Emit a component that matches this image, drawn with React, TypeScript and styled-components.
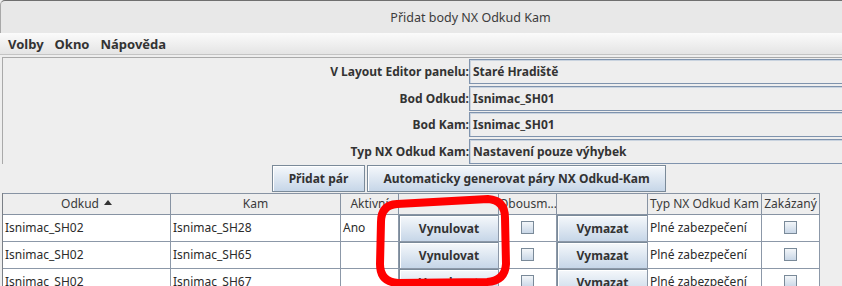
import React from 'react';
import styled, { createGlobalStyle } from 'styled-components';

const GlobalStyle = createGlobalStyle`
  html, body {
    margin: 0;
    padding: 0;
    background: #eeeeee;
  }
  body {
    font-family: 'Noto Sans', 'DejaVu Sans', sans-serif;
    color: #2b2b2b;
  }
`;

const Window = styled.div`
  position: relative;
  width: 842px;
  height: 286px;
  overflow: hidden;
  display: flex;
  flex-direction: column;
  background: #eeeeee;
`;

const TitleBar = styled.div`
  height: 32px;
  flex: none;
  border-top: 1px solid #6f6f6f;
  border-top-left-radius: 5px;
  border-left: 1px solid #a8a8a8;
  background: #e8e8e8;
  display: flex;
  align-items: center;
  justify-content: center;
  padding-left: 98px;
  font-size: 12.5px;
  color: #3c3c3c;
`;

const MenuBar = styled.div`
  height: 21px;
  flex: none;
  display: flex;
  align-items: center;
  gap: 11px;
  padding-left: 8px;
  background: linear-gradient(#fbfbfb, #e4e4e4);
  border-bottom: 1px solid #c4c4c4;
`;

const MenuItem = styled.span`
  font-size: 13px;
  font-weight: 700;
  color: #333;
`;

const FormPanel = styled.div`
  margin: 2px 0 0 2px;
  border-top: 1px solid #a9a9a9;
  border-left: 1px solid #a9a9a9;
  padding-top: 1px;
  display: grid;
  grid-template-columns: 466px 1fr;
  grid-auto-rows: 25px;
  row-gap: 1.5px;
`;

const FieldLabel = styled.div`
  display: flex;
  align-items: center;
  justify-content: flex-end;
  font-size: 12px;
  font-weight: 700;
  color: #333;
`;

const FieldValue = styled.div`
  display: flex;
  align-items: center;
  padding-left: 3px;
  border: 1px solid #7f93ad;
  border-right: none;
  box-shadow: inset 1px 1px 0 #c9d3df;
  font-size: 12px;
  font-weight: 700;
  color: #333;
`;

const ButtonRow = styled.div`
  display: flex;
  justify-content: center;
  gap: 2px;
  padding: 1.5px 0 0 96px;
  height: 27px;
  flex: none;
`;

const ActionButton = styled.button<{ $width: number }>`
  width: ${(p) => p.$width}px;
  height: 27px;
  font-family: 'Noto Sans', sans-serif;
  font-size: 12px;
  font-weight: 700;
  color: #333;
  border: 1px solid #7a8a99;
  box-shadow: inset 1px 1px 0 #ffffff;
  background: linear-gradient(#f5f8fb, #c6d6e8);
  padding: 0;
`;

const Table = styled.div`
  margin-left: 2px;
  margin-top: 0.5px;
  display: grid;
  grid-template-columns: 168px 170px 58px 100px 58px 91px 114px 58px;
  border-left: 1px solid #7a7f86;
  width: max-content;
`;

const HeaderCell = styled.div<{ $align?: string }>`
  height: 20px;
  border-top: 1px solid #8793a3;
  border-right: 1px solid #8793a3;
  border-bottom: 1px solid #8793a3;
  background: #eeeeee;
  display: flex;
  align-items: center;
  justify-content: ${(p) => p.$align || 'center'};
  gap: 5px;
  font-size: 12px;
  color: #3a3a3a;
  white-space: nowrap;
  overflow: hidden;
`;

const SortArrow = styled.span`
  width: 0;
  height: 0;
  border-left: 4px solid transparent;
  border-right: 4px solid transparent;
  border-bottom: 5px solid #333;
  margin-top: -2px;
`;

const Cell = styled.div<{ $center?: boolean }>`
  height: 26px;
  border-right: 1px solid #8c98a8;
  border-bottom: 1px solid #8c98a8;
  background: #ffffff;
  display: flex;
  align-items: center;
  justify-content: ${(p) => (p.$center ? 'center' : 'flex-start')};
  padding-left: ${(p) => (p.$center ? 0 : 2)}px;
  font-size: 12px;
  color: #2b2b2b;
  white-space: nowrap;
  overflow: hidden;
`;

const CellButton = styled.button`
  width: 100%;
  height: 100%;
  margin: 0;
  padding: 0;
  font-family: 'Noto Sans', sans-serif;
  font-size: 12px;
  font-weight: 700;
  color: #333;
  border: 1px solid #7a8a99;
  border-width: 1px 0 0 1px;
  box-shadow: inset 1px 1px 0 #ffffff;
  background: linear-gradient(#f5f8fb, #c6d6e8);
`;

const CheckBox = styled.span`
  width: 13px;
  height: 13px;
  box-sizing: border-box;
  border: 1px solid #7a8a99;
  background: linear-gradient(#f3f6f9, #c9d7e7);
`;

const Annotation = styled.svg`
  position: absolute;
  left: 0;
  top: 0;
  pointer-events: none;
`;

const fields = [
  ['V Layout Editor panelu:', 'Staré Hradiště'],
  ['Bod Odkud:', 'Isnimac_SH01'],
  ['Bod Kam:', 'Isnimac_SH01'],
  ['Typ NX Odkud Kam:', 'Nastavení pouze výhybek'],
];

const rows = [
  { from: 'Isnimac_SH02', to: 'Isnimac_SH28', active: 'Ano' },
  { from: 'Isnimac_SH02', to: 'Isnimac_SH65', active: '' },
  { from: 'Isnimac_SH02', to: 'Isnimac_SH67', active: '' },
];

export default function App() {
  return (
    <>
      <GlobalStyle />
      <Window>
        <TitleBar>Přidat body NX Odkud Kam</TitleBar>
        <MenuBar>
          <MenuItem>Volby</MenuItem>
          <MenuItem>Okno</MenuItem>
          <MenuItem>Nápověda</MenuItem>
        </MenuBar>

        <FormPanel>
          {fields.map(([label, value]) => (
            <React.Fragment key={label}>
              <FieldLabel>{label}</FieldLabel>
              <FieldValue>{value}</FieldValue>
            </React.Fragment>
          ))}
        </FormPanel>

        <ButtonRow>
          <ActionButton $width={93}>Přidat pár</ActionButton>
          <ActionButton $width={299}>Automaticky generovat páry NX Odkud-Kam</ActionButton>
        </ButtonRow>

        <Table>
          <HeaderCell>
            Odkud <SortArrow />
          </HeaderCell>
          <HeaderCell>Kam</HeaderCell>
          <HeaderCell>Aktivní</HeaderCell>
          <HeaderCell />
          <HeaderCell $align="flex-start">Obousm...</HeaderCell>
          <HeaderCell />
          <HeaderCell>Typ NX Odkud Kam</HeaderCell>
          <HeaderCell>Zakázaný</HeaderCell>

          {rows.map((r, i) => (
            <React.Fragment key={i}>
              <Cell>{r.from}</Cell>
              <Cell>{r.to}</Cell>
              <Cell>{r.active}</Cell>
              <Cell $center>
                <CellButton>Vynulovat</CellButton>
              </Cell>
              <Cell $center>
                <CheckBox />
              </Cell>
              <Cell $center>
                <CellButton>Vymazat</CellButton>
              </Cell>
              <Cell>Plné zabezpečení</Cell>
              <Cell $center>
                <CheckBox />
              </Cell>
            </React.Fragment>
          ))}
        </Table>

        <Annotation width="842" height="286" viewBox="0 0 842 286">
          <path
            d="M 397 204 L 488 199 Q 505 200 505 218 L 506 264 Q 505 281 487 282 L 398 283 Q 380 282 380 264 L 381 222 Q 381 205 397 204 Z"
            fill="none"
            stroke="#ff0000"
            strokeWidth="8"
            strokeLinejoin="round"
          />
        </Annotation>
      </Window>
    </>
  );
}
